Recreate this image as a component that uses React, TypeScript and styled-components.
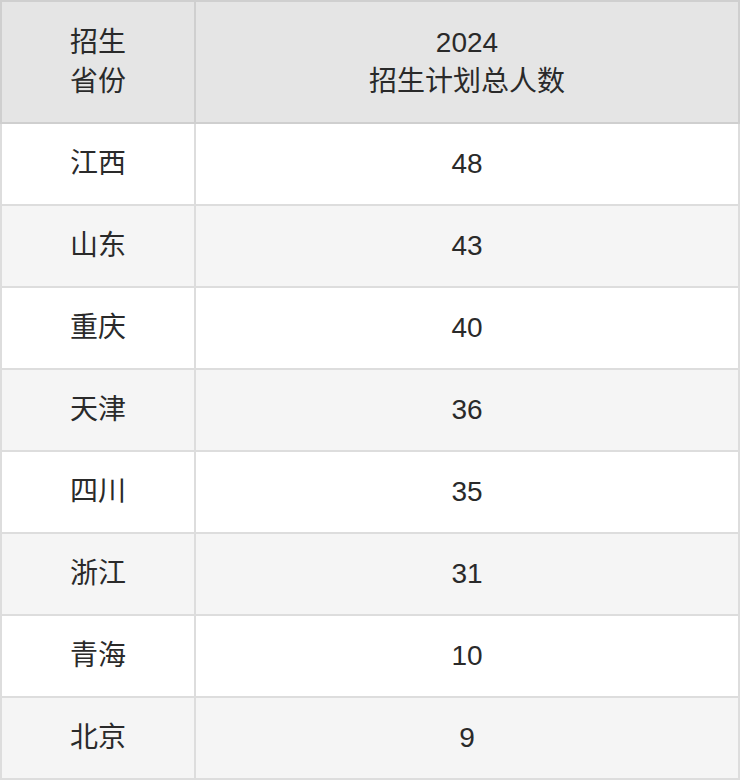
import React from "react";
import styled, { createGlobalStyle } from "styled-components";

const Global = createGlobalStyle`
  html, body { margin: 0; padding: 0; background: #fff; }
  body { font-family: "Liberation Sans", "Noto Sans CJK SC", sans-serif; }
`;

const Table = styled.table`
  width: 740px;
  border-collapse: collapse;
  table-layout: fixed;
  border: 2px solid #d4d4d4;
  color: #2a2a2a;
  font-family: "Liberation Sans", "Noto Sans CJK SC", sans-serif;
  font-size: 28px;
`;

const HeadCell = styled.th<{ $w?: number }>`
  width: ${(p) => (p.$w ? `${p.$w}px` : "auto")};
  height: 120px;
  padding: 0;
  background: #e5e5e5;
  border: 2px solid #cfcfcf;
  font-weight: 400;
  line-height: 39px;
  text-align: center;
  vertical-align: middle;
`;

const Row = styled.tr<{ $alt: boolean }>`
  background: ${(p) => (p.$alt ? "#f5f5f5" : "#ffffff")};
`;

const Cell = styled.td`
  height: 80px;
  padding: 0;
  border: 2px solid #dddddd;
  text-align: center;
  vertical-align: middle;
  line-height: 36px;
`;

const rows: [string, string][] = [
  ["江西", "48"],
  ["山东", "43"],
  ["重庆", "40"],
  ["天津", "36"],
  ["四川", "35"],
  ["浙江", "31"],
  ["青海", "10"],
  ["北京", "9"],
];

export default function App() {
  return (
    <>
      <Global />
      <Table>
        <thead>
          <tr>
            <HeadCell $w={192}>
              招生
              <br />
              省份
            </HeadCell>
            <HeadCell>
              2024
              <br />
              招生计划总人数
            </HeadCell>
          </tr>
        </thead>
        <tbody>
          {rows.map(([p, n], i) => (
            <Row key={p} $alt={i % 2 === 1}>
              <Cell>{p}</Cell>
              <Cell>{n}</Cell>
            </Row>
          ))}
        </tbody>
      </Table>
    </>
  );
}
